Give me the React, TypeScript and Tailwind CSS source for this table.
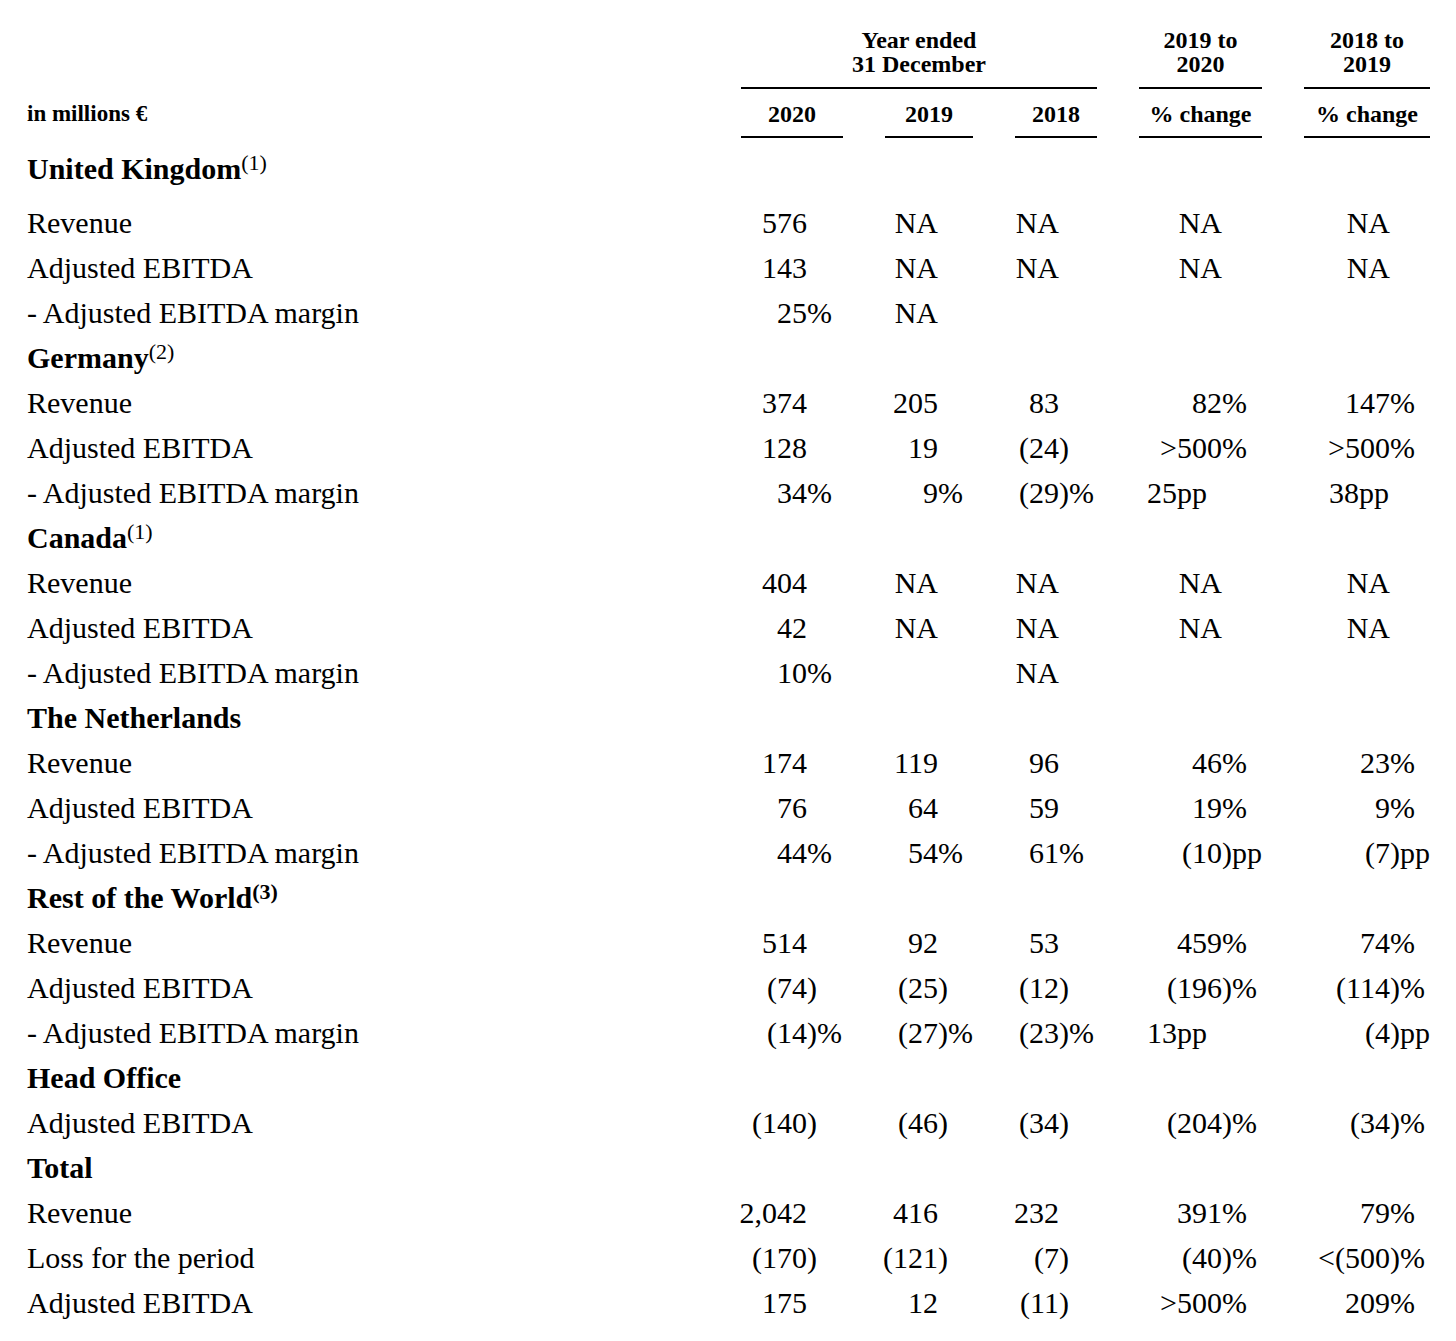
type Cell = string | null | [string, string];

type Row =
  | { kind: "section"; label: string; sup?: string; boldSup?: boolean; first?: boolean }
  | { kind: "line"; label: string; cells: Cell[] };

const MAIN_W = ["w-[87px]", "w-[68px]", "w-[59px]", "w-[102px]", "w-[105px]"];

const ROWS: Row[] = [
  { kind: "section", label: "United Kingdom", sup: "(1)", first: true },
  { kind: "line", label: "Revenue", cells: ["576", "NA", "NA", "NA", "NA"] },
  { kind: "line", label: "Adjusted EBITDA", cells: ["143", "NA", "NA", "NA", "NA"] },
  { kind: "line", label: "- Adjusted EBITDA margin", cells: ["25%", "NA", null, null, null] },
  { kind: "section", label: "Germany", sup: "(2)" },
  { kind: "line", label: "Revenue", cells: ["374", "205", "83", "82%", "147%"] },
  { kind: "line", label: "Adjusted EBITDA", cells: ["128", "19", "(24)", ">500%", ">500%"] },
  {
    kind: "line",
    label: "- Adjusted EBITDA margin",
    cells: ["34%", "9%", "(29)%", ["25pp", "w-[57px]"], ["38pp", "w-[74px]"]],
  },
  { kind: "section", label: "Canada", sup: "(1)" },
  { kind: "line", label: "Revenue", cells: ["404", "NA", "NA", "NA", "NA"] },
  { kind: "line", label: "Adjusted EBITDA", cells: ["42", "NA", "NA", "NA", "NA"] },
  { kind: "line", label: "- Adjusted EBITDA margin", cells: ["10%", null, "NA", null, null] },
  { kind: "section", label: "The Netherlands" },
  { kind: "line", label: "Revenue", cells: ["174", "119", "96", "46%", "23%"] },
  { kind: "line", label: "Adjusted EBITDA", cells: ["76", "64", "59", "19%", "9%"] },
  { kind: "line", label: "- Adjusted EBITDA margin", cells: ["44%", "54%", "61%", "(10)pp", "(7)pp"] },
  { kind: "section", label: "Rest of the World", sup: "(3)", boldSup: true },
  { kind: "line", label: "Revenue", cells: ["514", "92", "53", "459%", "74%"] },
  { kind: "line", label: "Adjusted EBITDA", cells: ["(74)", "(25)", "(12)", "(196)%", "(114)%"] },
  {
    kind: "line",
    label: "- Adjusted EBITDA margin",
    cells: ["(14)%", "(27)%", "(23)%", ["13pp", "w-[57px]"], "(4)pp"],
  },
  { kind: "section", label: "Head Office" },
  { kind: "line", label: "Adjusted EBITDA", cells: ["(140)", "(46)", "(34)", "(204)%", "(34)%"] },
  { kind: "section", label: "Total" },
  { kind: "line", label: "Revenue", cells: ["2,042", "416", "232", "391%", "79%"] },
  { kind: "line", label: "Loss for the period", cells: ["(170)", "(121)", "(7)", "(40)%", "<(500)%"] },
  { kind: "line", label: "Adjusted EBITDA", cells: ["175", "12", "(11)", ">500%", "209%"] },
];

const GRID = "grid grid-cols-[693px_150px_130px_120px_165px_171px]";

// digits sit on a right edge, trailing ")" "%" "pp" hang past it
function Num({ cell, col }: { cell: Cell; col: number }) {
  if (!cell) return <div />;
  const [v, w] = Array.isArray(cell) ? cell : [cell, MAIN_W[col]];
  const m = v.match(/^(.*[0-9A-Z])([^0-9A-Z]*)$/);
  const main = m ? m[1] : v;
  const suffix = m ? m[2] : "";
  return (
    <div className="flex whitespace-nowrap">
      <span className={`${w} shrink-0 text-right`}>{main}</span>
      <span>{suffix}</span>
    </div>
  );
}

function Header() {
  return (
    <div className="text-[24px] font-bold leading-[24px]">
      <div className={`${GRID} items-end pt-[28px]`}>
        <div />
        <div className="col-span-3 ml-[21px] mr-[23px] flex flex-col">
          <div className="text-center">
            Year ended
            <br />
            31 December
          </div>
          <div className="mt-[11px] h-[2px] bg-black" />
        </div>
        <div className="ml-[19px] flex w-[123px] flex-col">
          <div className="text-center">
            2019 to
            <br />
            2020
          </div>
          <div className="mt-[11px] h-[2px] bg-black" />
        </div>
        <div className="ml-[19px] flex w-[126px] flex-col">
          <div className="text-center">
            2018 to
            <br />
            2019
          </div>
          <div className="mt-[11px] h-[2px] bg-black" />
        </div>
      </div>

      <div className={`${GRID} mt-[13px] items-end`}>
        <div className="pb-[12px] text-[23px]">in millions €</div>
        <div className="ml-[21px] w-[102px]">
          <div className="text-center">2020</div>
          <div className="mt-[10px] h-[2px] bg-black" />
        </div>
        <div className="ml-[15px] w-[88px]">
          <div className="text-center">2019</div>
          <div className="mt-[10px] h-[2px] bg-black" />
        </div>
        <div className="ml-[15px] w-[82px]">
          <div className="text-center">2018</div>
          <div className="mt-[10px] h-[2px] bg-black" />
        </div>
        <div className="ml-[19px] w-[123px]">
          <div className="text-center">% change</div>
          <div className="mt-[10px] h-[2px] bg-black" />
        </div>
        <div className="ml-[19px] w-[126px]">
          <div className="text-center">% change</div>
          <div className="mt-[10px] h-[2px] bg-black" />
        </div>
      </div>
    </div>
  );
}

export default function App() {
  return (
    <div className="min-h-[1341px] w-[1456px] bg-white pl-[27px] font-['Liberation_Serif','Times_New_Roman',serif] text-black">
      <Header />

      <div className="mt-[8px] text-[30px] leading-[45px]">
        {ROWS.map((r, i) =>
          r.kind === "section" ? (
            <div key={i} className={`h-[45px] font-bold ${r.first ? "mb-[9px]" : ""}`}>
              {r.label}
              {r.sup && (
                <span
                  className={`relative -top-[9px] align-baseline text-[22px] leading-[0] ${r.boldSup ? "font-bold" : "font-normal"}`}
                >
                  {r.sup}
                </span>
              )}
            </div>
          ) : (
            <div key={i} className={`${GRID} h-[45px]`}>
              <div>{r.label}</div>
              {r.cells.map((c, j) => (
                <Num key={j} cell={c} col={j} />
              ))}
            </div>
          ),
        )}
      </div>
    </div>
  );
}
